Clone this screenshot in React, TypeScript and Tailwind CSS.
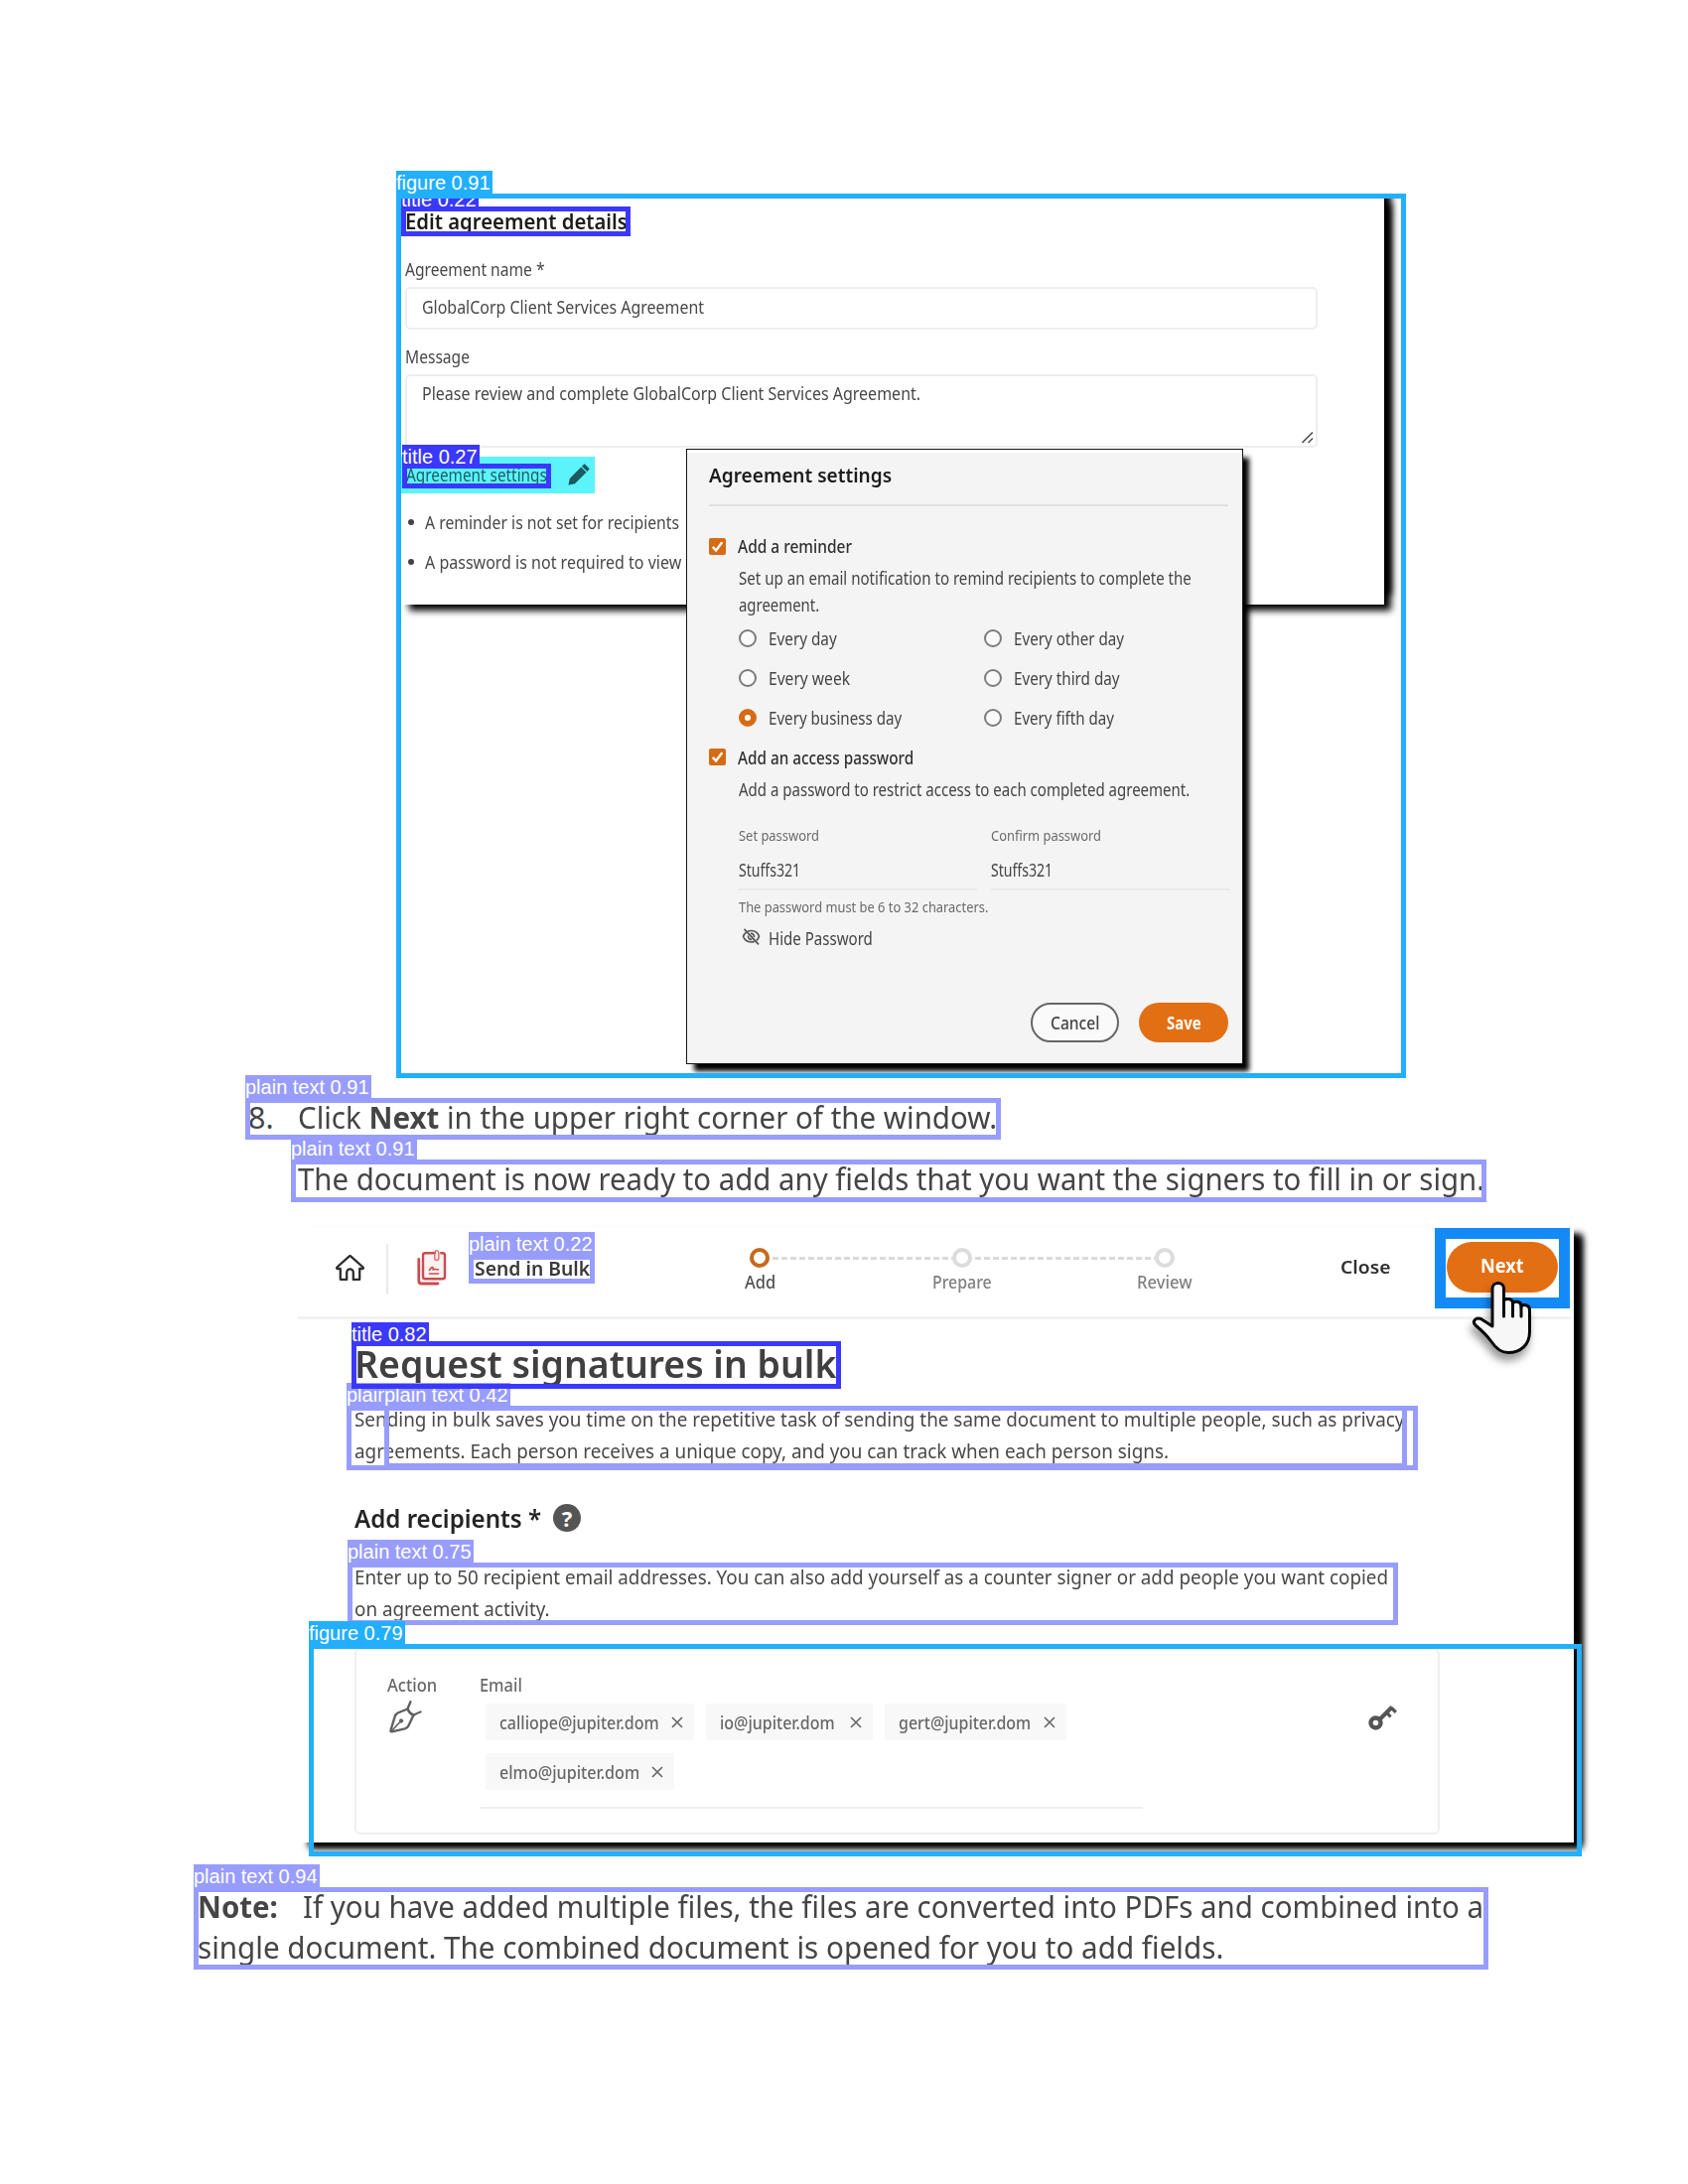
import { useLayoutEffect, useRef, useState, type ReactNode } from "react";

/** One line of text, condensed or widened to an exact width. */
function Line({ w, className = "", children }: { w: number; className?: string; children: ReactNode }) {
  const ref = useRef<HTMLSpanElement>(null);
  const [scale, setScale] = useState(1);
  useLayoutEffect(() => {
    if (ref.current) setScale(w / ref.current.offsetWidth);
  }, [w]);
  return (
    <span className={`block shrink-0 whitespace-pre ${className}`} style={{ width: w }}>
      <span ref={ref} className="inline-block origin-left" style={{ transform: `scaleX(${scale})` }}>
        {children}
      </span>
    </span>
  );
}

function Checkbox({ className = "" }: { className?: string }) {
  return (
    <span className={`flex size-[17px] shrink-0 items-center justify-center rounded-[2px] bg-[#d66b15] ${className}`}>
      <svg viewBox="0 0 12 12" className="size-[13px]" fill="none" stroke="#fff" strokeWidth="2.2">
        <path d="M1.6 6.4 4.7 9.6 10.4 2" />
      </svg>
    </span>
  );
}

function Radio({ label, w, checked = false }: { label: string; w: number; checked?: boolean }) {
  return (
    <div className="flex h-5 w-[247px]">
      <span
        className={
          checked
            ? "mt-px size-[18px] rounded-full border-[6px] border-[#d66b15] bg-white"
            : "mt-px size-[18px] rounded-full border-2 border-[#7c7c7c] bg-[#fafafa]"
        }
      />
      <Line w={w} className="ml-3 leading-5">
        {label}
      </Line>
    </div>
  );
}

function PasswordField({ label, w }: { label: string; w: number }) {
  return (
    <div className="w-60">
      <Line w={w} className="text-[15px] leading-5 text-[#6a6a6a]">{label}</Line>
      <Line w={62} className="mt-[15px] leading-5">Stuffs321</Line>
      <div className="mt-[9px] h-0.5 bg-[#e9e9e9]" />
    </div>
  );
}

function SettingsDialog() {
  return (
    <div className="absolute left-[292px] top-[257px] h-[620px] w-[561px] border-[1.5px] border-[#151515] bg-[#f4f4f4] pl-[22px] text-[17.5px] text-[#454545] shadow-[7px_8px_5px_-1px_#000]">
      <div className="-ml-[22px] h-[3px] bg-white" />
      <Line w={184} className="mt-2 text-[20.5px] font-semibold leading-7 text-[#1c1c1c]">Agreement settings</Line>
      <div className="mt-4 h-0.5 w-[523px] bg-[#e0e0e0]" />
      <div className="mt-[30px] flex">
        <Checkbox className="mt-0.5" />
        <Line w={115} className="ml-3 font-medium leading-5 text-[#303030]">Add a reminder</Line>
      </div>
      <div className="ml-[29.5px] mt-[9px] leading-[27px]">
        <Line w={456}>Set up an email notification to remind recipients to complete the</Line>
        <Line w={81}>agreement.</Line>
      </div>
      <div className="ml-[29.5px] mt-2.5 grid w-[494px] grid-cols-2 gap-y-5">
        <Radio label="Every day" w={69} />
        <Radio label="Every other day" w={111} />
        <Radio label="Every week" w={82} />
        <Radio label="Every third day" w={107} />
        <Radio label="Every business day" w={134} checked />
        <Radio label="Every fifth day" w={101} />
      </div>
      <div className="mt-5 flex">
        <Checkbox className="mt-px" />
        <Line w={177.5} className="ml-3 font-medium leading-5 text-[#303030]">Add an access password</Line>
      </div>
      <div className="ml-[29.5px]">
        <Line w={454} className="mt-3 leading-5">Add a password to restrict access to each completed agreement.</Line>
        <div className="mt-[26px] flex gap-3.5">
          <PasswordField label="Set password" w={81} />
          <PasswordField label="Confirm password" w={111} />
        </div>
        <Line w={251.5} className="mt-1.5 text-[15px] leading-5 text-[#6a6a6a]">The password must be 6 to 32 characters.</Line>
        <div className="mt-[12px] flex">
          <svg viewBox="0 0 19 17" className="ml-[3px] h-[17px] w-[19px]" fill="none" stroke="#555" strokeWidth="1.7">
            <path d="M6 3.3C7 2.8 8.200 2.500 9.500 2.500c4.200 0 7 3 8 5.800-.5 1.500-1.400 2.900-2.600 4M12.700 13.400c-1 .4-2 .6-3.200.6-4.100 0-7-2.900-8-5.700.6-1.600 1.600-3.100 3-4.200" />
            <path d="M2.500.8 17 16.300" />
            <path d="M9 5.500a3 3 0 0 1 3.500 3.600M6.600 7.500a3 3 0 0 0 3.600 3.800" />
          </svg>
          <Line w={105} className="ml-2 leading-5">Hide Password</Line>
        </div>
      </div>
      <div className="ml-[324px] mt-[55px] flex gap-5">
        <div className="flex h-10 w-[89px] items-center justify-center rounded-full border-2 border-[#666] bg-[#fafafa]">
          <Line w={49} className="font-medium leading-5">Cancel</Line>
        </div>
        <div className="flex h-10 w-[90px] items-center justify-center rounded-full bg-[#e36f14]">
          <Line w={35} className="font-bold leading-5 text-white">Save</Line>
        </div>
      </div>
    </div>
  );
}

function AgreementFigure() {
  return (
    <section className="relative ml-[399px] h-[890px] w-[1017px] overflow-hidden">
      <div className="ml-0.5 h-[414px] w-[993px] bg-white pl-[7px] pt-3.5 text-[17.5px] text-[#484848] shadow-[9px_8px_7px_-2px_#000,9px_-8px_7px_-2px_#000]">
        <Line w={224} className="text-[21px] font-semibold leading-7 text-[#1c1c1c]">Edit agreement details</Line>
        <Line w={141} className="mt-6 leading-5">Agreement name *</Line>
        <div className="mt-2 h-[43px] w-[919px] rounded-[5px] border-2 border-[#eee] pl-[15px] pt-2">
          <Line w={284} className="leading-5">GlobalCorp Client Services Agreement</Line>
        </div>
        <Line w={65} className="mt-[17px] leading-5">Message</Line>
        <div className="mt-2 flex h-[74px] w-[919px] justify-between rounded-[5px] border-2 border-[#eee] pl-[15px] pt-[7px]">
          <Line w={502} className="leading-5">Please review and complete GlobalCorp Client Services Agreement.</Line>
          <svg viewBox="0 0 12 12" className="mb-0.5 mr-0.5 size-3 self-end" stroke="#555" strokeWidth="1.6">
            <path d="M.5 11 11 .5M6.500 11 11 6.500" />
          </svg>
        </div>
        <div className="-ml-1 mt-[9px] flex h-[37px] w-[195px] bg-[#5bf4fb] pl-[5px] pt-2">
          <Line w={142} className="leading-5 text-[#1e5c63]">Agreement settings</Line>
          <svg viewBox="0 0 22 22" className="-mt-px ml-[21px] size-[22px]" fill="#1d5a60">
            <path d="m17.300.8 3.900 3.900c.5.500.5 1 0 1.400l-1.900 1.900-5.300-5.300L15.900.8c.4-.4 1-.4 1.400 0ZM13.200 3.500l5.300 5.300L7 20.300 1 21.500c-.3.100-.6-.2-.5-.5l1.300-6.100L13.200 3.500Z" />
          </svg>
        </div>
        <ul className="mt-[19px] flex flex-col gap-5 pl-[3px]">
          <li className="flex items-center">
            <span className="mr-[11px] size-[6px] rounded-full bg-[#444]" />
            <Line w={256} className="leading-5">A reminder is not set for recipients</Line>
          </li>
          <li className="flex items-center">
            <span className="mr-[11px] size-[6px] rounded-full bg-[#444]" />
            <Line w={268} className="leading-5">A password is not required to view t</Line>
          </li>
        </ul>
      </div>
      <SettingsDialog />
    </section>
  );
}

function Chip({ text, w, className }: { text: string; w: number; className: string }) {
  return (
    <div className={`flex h-[37px] items-center justify-between bg-[#f8f8f8] pl-[14px] pr-[11px] ${className}`}>
      <Line w={w} className="font-medium leading-5">{text}</Line>
      <svg viewBox="0 0 12 12" className="mt-px size-3" stroke="#666" strokeWidth="1.6">
        <path d="M1 1 11 11M11 1 1 11" />
      </svg>
    </div>
  );
}

const DASHES =
  "h-[3px] w-[184px] bg-[repeating-linear-gradient(90deg,#fff_0_3px,#dadada_3px_9px)]";

function BulkHeader() {
  return (
    <header className="flex h-[90px] items-start pl-[38px]">
      <svg viewBox="0 0 29 26" className="mt-7 h-[26px] w-[29px]" fill="none" stroke="#2e2e2e" strokeWidth="2.3" strokeLinejoin="round">
        <path d="M4.800 14v10.200c0 .5.300.8.800.8h5.600v-7.300a3.300 3.300 0 0 1 6.600 0V25h5.600c.5 0 .8-.3.800-.8V14h2.800c.8 0 1.200-.9.600-1.500L15.400 1.600c-.5-.5-1.300-.5-1.800 0L1.400 12.500c-.6.600-.2 1.500.6 1.500h2.800Z" />
      </svg>
      <div className="ml-[22px] mt-[17px] h-[51px] w-0.5 bg-[#eaeaea]" />
      <svg viewBox="0 0 30 37" className="ml-[29px] mt-[22px] h-[37px] w-[30px]" fill="none" stroke="#c94c50" strokeWidth="2.400" strokeLinecap="round">
        <path fill="#fdf1f1" d="M18 4.200H8.300C7 4.200 6 5.200 6 6.400v21.500c0 1.300 1 2.300 2.300 2.300h17.400c1.300 0 2.300-1 2.300-2.300V6.400c0-1.200-1-2.200-2.300-2.200h-1.500" />
        <path d="M1.800 10.500v21.700c0 1.600 1.200 2.800 2.800 2.800H21" strokeWidth="2.800" />
        <path d="M17.800 6v3.500a2 2 0 0 0 4 0V3.500a2.100 2.100 0 0 0-4-.5" strokeWidth="1.500" stroke="#dd7478" />
        <path d="M12.500 25h9M12.500 21.500c1.500-2.500 3-3.600 3.500-2.800s-.6 2.600.5 2.300 1-1 2-.5 1.500.3 3 .3" strokeWidth="1.600" />
      </svg>
      <Line w={116} className="ml-[28px] mt-8 text-[19px] font-semibold leading-5 text-[#3a3a3a]">Send in Bulk</Line>
      <div className="ml-[161px] mt-[21px] w-[428px] shrink-0">
        <div className="flex items-center">
          <span className="size-5 rounded-full border-4 border-[#c4691f]" />
          <span className={DASHES} />
          <span className="size-5 rounded-full border-4 border-[#dcdcdc]" />
          <span className={DASHES} />
          <span className="size-5 rounded-full border-4 border-[#dcdcdc]" />
        </div>
        <div className="-ml-[92px] mt-1 grid w-[612px] grid-cols-3 justify-items-center text-[17.5px] font-medium leading-5 text-[#808080]">
          <Line w={31} className="text-[#505050]">Add</Line>
          <Line w={60}>Prepare</Line>
          <Line w={56}>Review</Line>
        </div>
      </div>
      <Line w={50} className="ml-[167px] mt-[30px] text-[18.5px] font-semibold leading-5 text-[#303030]">Close</Line>
      <div className="relative ml-[45px] mt-px flex h-[81px] w-[136px] shrink-0 justify-center border-[11px] border-[#148af7] bg-white pt-[3px]">
        <div className="flex h-[51px] w-[112px] items-center justify-center rounded-[26px] bg-[#e36f14] pb-[3px]">
          <Line w={44} className="text-[19px] font-bold leading-6 text-white">Next</Line>
        </div>
        <svg
          viewBox="0 0 62 76"
          className="absolute left-[26px] top-[42px] h-[76px] w-[62px] drop-shadow-[-2px_7px_4px_rgba(0,0,0,0.4)]"
          fill="#f7f7f7"
          stroke="#080808"
          strokeWidth="3"
          strokeLinejoin="round"
          strokeLinecap="round"
        >
          <path d="M21 8c0-7.500 11.500-7.500 11.500 0v13c1-4 9-3 9 1.500v1c1-3.500 8.500-3 8.500 2v1c1-3 8.500-2.500 8.500 3v22c0 13-9 21-21.500 21-8 0-13-5-17-11C15 54.500 10 50 4 45c-4-4 .5-8.500 5.500-6.500L21 46V8Z" />
          <path d="M32.500 20v16M41.500 23v13M50 26v10" />
        </svg>
      </div>
    </header>
  );
}

function BulkFigure() {
  return (
    <section className="ml-[300px] mt-[29px] h-[620px] w-[1285px] bg-white text-[#484848] shadow-[10px_8px_7px_-2px_#000,10px_5px_7px_-2px_#000]">
      <BulkHeader />
      <div className="h-[3px] w-[1282px] bg-[#f2f2f2]" />
      <div className="pl-[57px]">
        <Line w={485} className="mt-5 text-[38.5px] font-semibold leading-[48px] text-[#404040]">Request signatures in bulk</Line>
        <div className="mt-[17px] text-[19.5px] leading-8">
          <Line w={1057}>Sending in bulk saves you time on the repetitive task of sending the same document to multiple people, such as privacy</Line>
          <Line w={820}>agreements. Each person receives a unique copy, and you can track when each person signs.</Line>
        </div>
        <div className="mt-[35px] flex">
          <Line w={188} className="text-[25px] font-semibold leading-8 text-[#242424]">Add recipients *</Line>
          <span className="ml-[12px] mt-0.5 flex size-7 items-center justify-center rounded-full bg-[#555] text-[22px] font-bold leading-7 text-white">?</span>
        </div>
        <div className="mt-7 text-[19.5px] leading-8">
          <Line w={1041}>Enter up to 50 recipient email addresses. You can also add yourself as a counter signer or add people you want copied</Line>
          <Line w={197}>on agreement activity.</Line>
        </div>
        <div className="mt-[23px] flex h-[188px] w-[1093px] rounded-md border-2 border-[#efefef] pl-[31px] pt-[25px] text-[17.5px] text-[#686868]">
          <div className="w-[93px]">
            <Line w={50} className="font-medium leading-5">Action</Line>
            <svg viewBox="0 0 33 33" className="ml-0.5 mt-1.5 size-[33px]" fill="none" stroke="#606060" strokeWidth="2.400" strokeLinejoin="round" strokeLinecap="round">
              <path d="M18.500 8.500 8.500 12.500C6.500 13.600 5.900 15 5.400 17L1.500 30c-.2.900.4 1.500 1.300 1.300l13-3c1.600-.4 2.900-1.300 3.600-2.800l5-10.800" />
              <path d="M21.500 1.200c-1.200 2.400-2 4.600-3 7.300 1 2.700 3 5 5.900 6.200 2.300-1.200 4.600-2.300 7-3.200" />
              <path d="M3 30 10.500 22" strokeWidth="1.600" />
              <circle cx="12" cy="20.500" r="1.700" fill="#606060" strokeWidth="1" />
            </svg>
          </div>
          <div className="w-[668px]">
            <Line w={43} className="font-medium leading-5">Email</Line>
            <div className="ml-1.5 mt-[9px] flex flex-wrap gap-x-3 gap-y-[13px]">
              <Chip text="calliope@jupiter.dom" w={161} className="w-[210px]" />
              <Chip text="io@jupiter.dom" w={116} className="w-[168px]" />
              <Chip text="gert@jupiter.dom" w={133} className="w-[183px]" />
              <Chip text="elmo@jupiter.dom" w={141} className="w-[190px]" />
            </div>
            <div className="mt-[17px] h-0.5 bg-[#efefef]" />
          </div>
          <svg viewBox="0 0 29 25" className="ml-[227px] mt-[31px] h-[25px] w-[29px]" fill="none" stroke="#555">
            <circle cx="7.500" cy="17.500" r="5" strokeWidth="4.400" />
            <path d="M12 13.500 24 1.500" strokeWidth="4" />
            <path d="m18.500 7 4 4.500M23.500 2.500l4.300 4.300" strokeWidth="3.200" />
          </svg>
        </div>
      </div>
    </section>
  );
}

/** Region marker: an outlined box with a caption tab above its top left corner. */
function Region({ label, className, tab }: { label: string; className: string; tab: string }) {
  return (
    <div className={`absolute border-[5px] ${className}`}>
      <span className={`absolute -left-[5px] whitespace-pre font-['Liberation_Sans',sans-serif] text-[20px] leading-[25px] text-white ${tab}`}>
        {label}
      </span>
    </div>
  );
}

const TALL_LIGHT = "-top-[28px] h-[25px] w-[127px] bg-[#989dfd]";
const TALL_LIGHT_NARROW = "-top-[28px] h-[25px] w-[38px] overflow-hidden bg-[#989dfd]";
const TALL_CYAN = "-top-[28px] h-[25px] w-[97px] bg-[#22affe]";
const SHORT_BLUE = "-top-[24px] h-[22px] w-[78px] bg-[#3b38fd]";

function Regions() {
  return (
    <div className="pointer-events-none absolute inset-0">
      <Region label="plain text" className="left-[349px] top-[1416px] h-[65px] w-[1079px] border-[#989dfd]" tab={TALL_LIGHT_NARROW} />
      <Region label="plain text 0.42" className="left-[387px] top-[1416px] h-[63px] w-[1030px] border-[#989dfd]" tab={TALL_LIGHT} />
      <Region label="plain text 0.22" className="left-[472px] top-[1264px] h-[29px] w-[127px] border-[#989dfd]" tab={TALL_LIGHT} />
      <Region label="title 0.22" className="left-[404px] top-[208px] h-[30px] w-[231px] border-[#3b38fd]" tab={SHORT_BLUE} />
      <Region label="title 0.27" className="left-[405px] top-[467px] h-[25px] w-[150px] border-[#3b38fd]" tab={SHORT_BLUE} />
      <Region label="plain text 0.75" className="left-[350px] top-[1574px] h-[63px] w-[1058px] border-[#989dfd]" tab={TALL_LIGHT} />
      <Region label="figure 0.79" className="left-[311px] top-[1656px] h-[214px] w-[1282px] border-[#22affe]" tab={TALL_CYAN} />
      <Region label="title 0.82" className="left-[354px] top-[1351px] h-[48px] w-[493px] border-[#3b38fd]" tab={SHORT_BLUE} />
      <Region label="plain text 0.91" className="left-[247px] top-[1106px] h-[42px] w-[761px] border-[#989dfd]" tab={TALL_LIGHT} />
      <Region label="plain text 0.91" className="left-[293px] top-[1168px] h-[43px] w-[1204px] border-[#989dfd]" tab={TALL_LIGHT} />
      <Region label="figure 0.91" className="left-[399px] top-[195px] h-[891px] w-[1017px] border-[#22affe]" tab={TALL_CYAN} />
      <Region label="plain text 0.94" className="left-[195px] top-[1901px] h-[83px] w-[1304px] border-[#989dfd]" tab={TALL_LIGHT} />
    </div>
  );
}

export default function App() {
  return (
    <main className="relative flex h-[2200px] w-[1700px] flex-col overflow-hidden bg-white pt-[195px] font-['Noto_Sans','Open_Sans',sans-serif]">
      <AgreementFigure />
      <div className="ml-[250px] mt-5 flex text-[30.5px] leading-10 text-[#454545]">
        <Line w={26}>8.</Line>
        <Line w={704} className="ml-[24px]">
          Click <b>Next</b> in the upper right corner of the window.
        </Line>
      </div>
      <Line w={1195} className="ml-[300px] mt-[22px] text-[30.5px] leading-10 text-[#454545]">
        The document is now ready to add any fields that you want the signers to fill in or sign.
      </Line>
      <BulkFigure />
      <div className="ml-[199px] mt-[44px] text-[30.5px] leading-[41px] text-[#454545]">
        <div className="flex">
          <Line w={81} className="font-bold">Note:</Line>
          <Line w={1189} className="ml-[25px]">If you have added multiple files, the files are converted into PDFs and combined into a</Line>
        </div>
        <Line w={1033}>single document. The combined document is opened for you to add fields.</Line>
      </div>
      <Regions />
    </main>
  );
}
